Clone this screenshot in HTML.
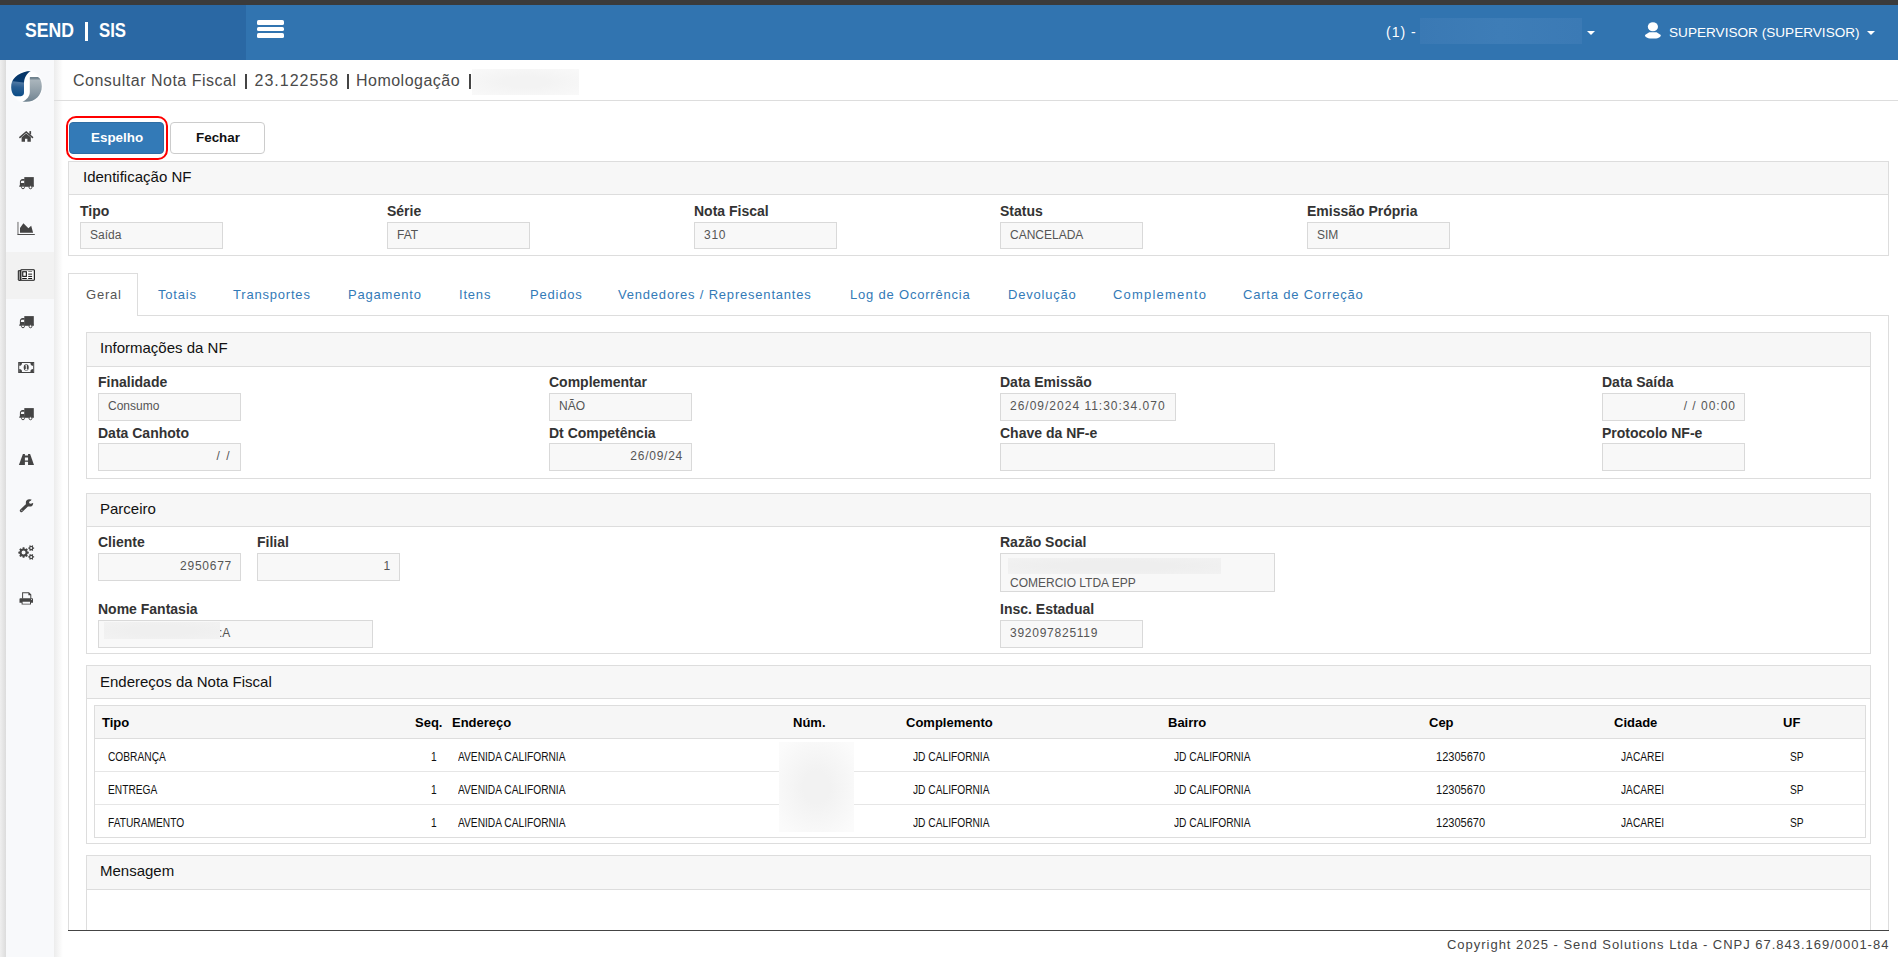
<!DOCTYPE html>
<html><head><meta charset="utf-8">
<style>
*{box-sizing:border-box;margin:0;padding:0}
html,body{width:1898px;height:957px;overflow:hidden;background:#fff;font-family:"Liberation Sans",sans-serif;color:#333}
.abs{position:absolute}
#topstrip{left:0;top:0;width:1898px;height:5px;background:#3b3b3b}
#hdr{left:0;top:5px;width:1898px;height:55px;background:#3174b0}
#brand{left:0;top:5px;width:246px;height:55px;background:#2a68a4}
#side{left:0;top:60px;width:54px;height:897px;background:#f8f9fb}
#sidestrip{left:0;top:60px;width:6px;height:897px;background:linear-gradient(to right,#efefef,#dcdcdc)}
#sideshadow{left:54px;top:60px;width:9px;height:897px;background:linear-gradient(to right,#ececec,rgba(255,255,255,0))}
#titlebar{left:54px;top:60px;width:1844px;height:41px;border-bottom:1px solid #ddd}
.t{position:absolute;white-space:nowrap;line-height:1}
.panel{position:absolute;border:1px solid #ddd;background:#fff}
.ph{position:absolute;left:0;top:0;right:0;background:#f7f7f7;border-bottom:1px solid #ddd}
.ph span{position:absolute;left:13px;font-size:15px;color:#111;white-space:nowrap;line-height:1}
.lbl{position:absolute;white-space:nowrap;font-weight:bold;font-size:14px;color:#333;line-height:1}
.inp{position:absolute;background:#f8f8f8;border:1px solid #d9d9d9;height:28px}
.inp span{position:absolute;top:6px;left:9px;font-size:12px;color:#555;white-space:nowrap;line-height:1}
.inp span.r{left:auto;right:8px}
.num{letter-spacing:.75px}
.tab{position:absolute;top:288px;font-size:13px;color:#337ab7;white-space:nowrap;line-height:1;letter-spacing:.8px}
.th{position:absolute;top:716px;font-weight:bold;font-size:13px;color:#000;white-space:nowrap;line-height:1}
.td{position:absolute;font-size:12px;color:#111;white-space:nowrap;line-height:1;transform-origin:0 0;transform:scaleX(.85)}
.tdn{transform:scaleX(.92)}
.ic{position:absolute;fill:#444}
</style></head><body>
<div id="topstrip" class="abs"></div>
<div id="hdr" class="abs"></div>
<div id="brand" class="abs"></div>
<div class="t" style="left:25px;top:19px;font-size:21px;font-weight:bold;color:#fff;transform-origin:0 0;transform:scaleX(.84)">SEND</div>
<div class="abs" style="left:85px;top:22px;width:3.4px;height:19px;background:#fff"></div>
<div class="t" style="left:98.5px;top:19px;font-size:21px;font-weight:bold;color:#fff;transform-origin:0 0;transform:scaleX(.8)">SIS</div>
<!-- hamburger -->
<div class="abs" style="left:257px;top:20.4px;width:27px;height:4.4px;background:#fff;border-radius:1.6px"></div>
<div class="abs" style="left:257px;top:26.8px;width:27px;height:4.2px;background:#fff;border-radius:1.6px"></div>
<div class="abs" style="left:257px;top:33.2px;width:27px;height:4.4px;background:#fff;border-radius:1.6px"></div>
<!-- right header -->
<div class="t" style="left:1386px;top:25px;font-size:14px;color:#fff;letter-spacing:1px">(1) -</div>
<div class="abs" style="left:1420px;top:18px;width:162px;height:26px;background:linear-gradient(to right,#3a79b4,#3e7db7 50%,#3b7ab5)"></div>
<div class="abs" style="left:1587px;top:31px;width:0;height:0;border-left:4.5px solid transparent;border-right:4.5px solid transparent;border-top:4px solid #fff"></div>
<svg class="abs" style="left:1640px;top:18px" width="26" height="24" viewBox="1640 18 26 24"><ellipse cx="1652.9" cy="26.8" rx="5.1" ry="4.5" fill="#fff"/><path d="M1649.2 32.2 L1656.6 32.2 L1660.8 35 C1660.8 37.6 1657.5 38.6 1652.9 38.6 C1648.3 38.6 1645 37.6 1645 35 Z" fill="#fff"/></svg>
<div class="t" style="left:1669px;top:26px;font-size:13.6px;color:#fff">SUPERVISOR (SUPERVISOR)</div>
<div class="abs" style="left:1867px;top:31px;width:0;height:0;border-left:4.5px solid transparent;border-right:4.5px solid transparent;border-top:4px solid #fff"></div>

<div id="side" class="abs"></div>
<div class="abs" style="left:6px;top:252px;width:48px;height:47px;background:#f2f2f2"></div>
<div id="sidestrip" class="abs"></div>
<div id="sideshadow" class="abs"></div>
<div id="titlebar" class="abs"></div>
<div class="t" style="left:73px;top:73px;font-size:16px;color:#4a4a4a;letter-spacing:.5px">Consultar Nota Fiscal</div>
<div class="abs" style="left:244.8px;top:74px;width:2px;height:15px;background:#444"></div>
<div class="t" style="left:254.5px;top:73px;font-size:16px;color:#4a4a4a;letter-spacing:1px">23.122558</div>
<div class="abs" style="left:346.6px;top:74px;width:2px;height:15px;background:#444"></div>
<div class="t" style="left:356px;top:73px;font-size:16px;color:#4a4a4a;letter-spacing:.48px">Homologação</div>
<div class="abs" style="left:469px;top:74px;width:2px;height:15px;background:#444"></div>
<div class="abs" style="left:472px;top:69px;width:107px;height:26px;background:radial-gradient(ellipse at center,#f3f3f3 30%,#f9f9f9 100%)"></div>

<!-- logo -->
<svg class="abs" style="left:6px;top:66px" width="42" height="42" viewBox="6 66 42 42">
<defs>
<linearGradient id="lb" gradientUnits="userSpaceOnUse" x1="20" y1="71" x2="17" y2="97"><stop offset="0" stop-color="#063466"/><stop offset=".4" stop-color="#073a6f"/><stop offset=".44" stop-color="#4f78a3"/><stop offset=".62" stop-color="#2b5f93"/><stop offset="1" stop-color="#074a85"/></linearGradient>
<linearGradient id="lg" gradientUnits="userSpaceOnUse" x1="0" y1="77" x2="0" y2="102"><stop offset="0" stop-color="#6b7e8a"/><stop offset=".08" stop-color="#7b8c97"/><stop offset=".12" stop-color="#aab5bc"/><stop offset=".6" stop-color="#8d9ca6"/><stop offset="1" stop-color="#6f8390"/></linearGradient>
<radialGradient id="halo" gradientUnits="userSpaceOnUse" cx="26.4" cy="86.4" r="17.5"><stop offset=".85" stop-color="#fff"/><stop offset="1" stop-color="#fff" stop-opacity="0"/></radialGradient>
</defs>
<circle cx="26.4" cy="86.4" r="17.5" fill="url(#halo)"/>
<path d="M30.8 71 C21 71.3 12.5 77 11.3 84.5 C10.9 88.5 11.5 92 13 94.2 C14 95.6 15.2 96.2 17 96.2 L20.8 96.2 C23 96 24 94.5 24 92.5 L24 82.5 C24.2 77.5 27 73 30.8 71 Z" fill="url(#lb)"/>
<path d="M30.2 77.1 L37.8 77.1 C40.5 78 41.8 82.5 41.8 86.4 C41.8 95 35 101.8 26.4 101.8 L22.4 101.8 C27 99.8 29.8 96 29.8 92 L29.8 77.6 Z" fill="url(#lg)"/>
</svg>

<!-- sidebar icons -->
<svg class="ic" style="left:18px;top:129px" width="16" height="15" viewBox="18 129 16 15"><rect x="29.4" y="131.1" width="1.7" height="3.4"/><polyline points="19.9,137.4 26.2,131.9 32.5,137.4" fill="none" stroke="#444" stroke-width="1.5" stroke-linecap="round"/><path d="M21.6 137.3 L26.2 133.6 L30.8 137.3 L30.8 141.8 L27.4 141.8 L27.4 138.8 L25 138.8 L25 141.8 L21.6 141.8 Z"/></svg>
<svg class="ic" style="left:18px;top:175px" width="18" height="15" viewBox="18 175 18 15"><rect x="24.3" y="177.1" width="9.5" height="9.4"/><path fill-rule="evenodd" d="M24.6 178.9 L22.5 178.9 C21 178.9 19.9 180.3 19.9 181.8 L19.9 186.5 L24.6 186.5 Z M20.9 183.1 L20.9 182 C20.9 181.3 21.5 180.8 22.3 180.8 L24.3 180.8 L24.3 183.1 Z"/><rect x="19.1" y="185.6" width="14.7" height="1"/><circle cx="23" cy="187.3" r="1.45" fill="#fff" stroke="#444" stroke-width="1"/><circle cx="30.5" cy="187.3" r="1.45" fill="#fff" stroke="#444" stroke-width="1"/></svg>
<svg class="ic" style="left:16px;top:221px" width="20" height="15" viewBox="16 221 20 15"><rect x="17.2" y="221.9" width="1.5" height="13" fill="#999"/><rect x="17.6" y="234" width="17.2" height="0.95"/><path d="M20 232.7 L20 228.1 L23.4 223.2 L28.4 228.3 L31.2 225.8 L33.1 232.7 Z"/></svg>
<svg style="position:absolute;left:16px;top:268px" width="20" height="14" viewBox="16 268 20 14"><rect x="20.75" y="269.75" width="13.6" height="10.5" rx="0.8" fill="#fff" stroke="#111" stroke-width="1.1"/><path d="M20.7 270.7 L18.3 270.7 L18.3 279.8 C18.3 280.2 18.6 280.4 19 280.4 L20.7 280.4 Z" fill="#999" stroke="#111" stroke-width="0.9"/><rect x="22.75" y="271.75" width="3.6" height="4.6" fill="#fff" stroke="#111" stroke-width="1.1"/><rect x="28.2" y="271.2" width="3.9" height="0.8" fill="#666"/><rect x="28.2" y="273.5" width="3.9" height="1.3" fill="#555"/><rect x="28.2" y="275.9" width="3.9" height="1" fill="#111"/><rect x="22.2" y="278" width="4.6" height="1" fill="#111"/><rect x="28.2" y="278" width="3.9" height="1" fill="#111"/></svg>
<svg class="ic" style="left:18px;top:314px" width="18" height="15" viewBox="18 175 18 15"><rect x="24.3" y="177.1" width="9.5" height="9.4"/><path fill-rule="evenodd" d="M24.6 178.9 L22.5 178.9 C21 178.9 19.9 180.3 19.9 181.8 L19.9 186.5 L24.6 186.5 Z M20.9 183.1 L20.9 182 C20.9 181.3 21.5 180.8 22.3 180.8 L24.3 180.8 L24.3 183.1 Z"/><rect x="19.1" y="185.6" width="14.7" height="1"/><circle cx="23" cy="187.3" r="1.45" fill="#fff" stroke="#444" stroke-width="1"/><circle cx="30.5" cy="187.3" r="1.45" fill="#fff" stroke="#444" stroke-width="1"/></svg>
<svg class="ic" style="left:18px;top:361px" width="17" height="13" viewBox="18 361 17 13"><path fill-rule="evenodd" d="M18.2 361.9 H34.2 V372.9 H18.2 Z M19.2 362.9 V371.9 H33.2 V362.9 Z"/><path d="M19.2 362.9 H22 A2.8 2.8 0 0 1 19.2 365.7 Z M33.2 362.9 H30.4 A2.8 2.8 0 0 0 33.2 365.7 Z M19.2 371.9 H22 A2.8 2.8 0 0 0 19.2 369.1 Z M33.2 371.9 H30.4 A2.8 2.8 0 0 1 33.2 369.1 Z"/><ellipse cx="26.2" cy="367.4" rx="2.5" ry="3.2"/><path d="M25.5 365.3 L26.8 364.8 L26.8 369.2 L27.6 369.2 L27.6 369.9 L25 369.9 L25 369.2 L25.8 369.2 L25.8 366.1 L25.3 366.3 Z" fill="#fff"/></svg>
<svg class="ic" style="left:18px;top:406px" width="18" height="15" viewBox="18 175 18 15"><rect x="24.3" y="177.1" width="9.5" height="9.4"/><path fill-rule="evenodd" d="M24.6 178.9 L22.5 178.9 C21 178.9 19.9 180.3 19.9 181.8 L19.9 186.5 L24.6 186.5 Z M20.9 183.1 L20.9 182 C20.9 181.3 21.5 180.8 22.3 180.8 L24.3 180.8 L24.3 183.1 Z"/><rect x="19.1" y="185.6" width="14.7" height="1"/><circle cx="23" cy="187.3" r="1.45" fill="#fff" stroke="#444" stroke-width="1"/><circle cx="30.5" cy="187.3" r="1.45" fill="#fff" stroke="#444" stroke-width="1"/></svg>
<svg class="ic" style="left:18px;top:453px" width="17" height="13" viewBox="18 453 17 13"><path d="M22.9 454 L30.1 454 L34 465 L18.9 465 Z"/><rect x="24.9" y="453.5" width="3.15" height="2" fill="#f8f9fb"/><rect x="24.9" y="457.5" width="3.15" height="3" fill="#f8f9fb"/><rect x="24.9" y="461.8" width="3.15" height="3.5" fill="#f8f9fb"/></svg>
<svg class="ic" style="left:16px;top:496px" width="20" height="18" viewBox="16 496 20 18"><line x1="21.4" y1="510.7" x2="26.6" y2="505.6" stroke="#444" stroke-width="3.1" stroke-linecap="round"/><circle cx="29.5" cy="502.9" r="3.7"/><circle cx="30.7" cy="502.2" r="1.5" fill="#f8f9fb"/><circle cx="32.7" cy="501.3" r="1.9" fill="#f8f9fb"/><circle cx="21.9" cy="510.2" r="0.5" fill="#f8f9fb"/></svg>
<svg class="ic" style="left:16px;top:543px" width="20" height="18" viewBox="16 543 20 18"><path fill-rule="evenodd" d="M27.52 551.55 L28.79 551.73 L28.79 553.47 L27.52 553.65 L27.11 554.66 L27.87 555.68 L26.64 556.91 L25.62 556.15 L24.61 556.56 L24.43 557.83 L22.69 557.83 L22.51 556.56 L21.50 556.15 L20.48 556.91 L19.25 555.68 L20.01 554.66 L19.60 553.65 L18.33 553.47 L18.33 551.73 L19.60 551.55 L20.01 550.54 L19.25 549.52 L20.48 548.29 L21.50 549.05 L22.51 548.64 L22.69 547.37 L24.43 547.37 L24.61 548.64 L25.62 549.05 L26.64 548.29 L27.87 549.52 L27.11 550.54 Z M25.56 552.60 A2.0 2.0 0 1 0 21.56 552.60 A2.0 2.0 0 1 0 25.56 552.60 Z"/><path fill-rule="evenodd" d="M33.28 547.38 L34.13 547.48 L34.13 548.72 L33.28 548.82 L32.87 549.54 L33.21 550.33 L32.13 550.95 L31.61 550.26 L30.79 550.26 L30.27 550.95 L29.19 550.33 L29.53 549.54 L29.12 548.82 L28.27 548.72 L28.27 547.48 L29.12 547.38 L29.53 546.66 L29.19 545.87 L30.27 545.25 L30.79 545.94 L31.61 545.94 L32.13 545.25 L33.21 545.87 L32.87 546.66 Z M32.20 548.10 A1.0 1.0 0 1 0 30.20 548.10 A1.0 1.0 0 1 0 32.20 548.10 Z"/><path fill-rule="evenodd" d="M33.28 556.18 L34.13 556.28 L34.13 557.52 L33.28 557.62 L32.87 558.34 L33.21 559.13 L32.13 559.75 L31.61 559.06 L30.79 559.06 L30.27 559.75 L29.19 559.13 L29.53 558.34 L29.12 557.62 L28.27 557.52 L28.27 556.28 L29.12 556.18 L29.53 555.46 L29.19 554.67 L30.27 554.05 L30.79 554.74 L31.61 554.74 L32.13 554.05 L33.21 554.67 L32.87 555.46 Z M32.20 556.90 A1.0 1.0 0 1 0 30.20 556.90 A1.0 1.0 0 1 0 32.20 556.90 Z"/></svg>
<svg class="ic" style="left:18px;top:591px" width="16" height="15" viewBox="18 591 16 15"><path fill-rule="evenodd" d="M22.1 592.2 L29 592.2 L31.3 594.5 L31.3 598.5 L30.3 598.5 L30.3 595.3 L28.4 595.3 L28.4 593.2 L23.1 593.2 L23.1 598.5 L22.1 598.5 Z"/><path fill-rule="evenodd" d="M20.3 598.3 L32.2 598.3 C32.7 598.3 33 598.6 33 599.1 L33 602.7 L31 602.7 L31 604.6 L21.6 604.6 L21.6 602.7 L19.5 602.7 L19.5 599.1 C19.5 598.6 19.8 598.3 20.3 598.3 Z M22.6 601.8 L22.6 603.7 L30 603.7 L30 601.8 Z"/><circle cx="31.5" cy="599.5" r="0.5" fill="#f8f9fb"/></svg>

<!-- buttons -->
<div class="abs" style="left:66px;top:116px;width:102px;height:44px;border:2.5px solid #f00;border-radius:10px"></div>
<div class="abs" style="left:69px;top:122px;width:95px;height:32px;background:#337ab7;border:1px solid #2e6da4;border-radius:4px"></div>
<div class="t" style="left:91px;top:131px;font-size:13.4px;font-weight:bold;color:#fff">Espelho</div>
<div class="abs" style="left:170px;top:122px;width:95px;height:32px;background:#fff;border:1px solid #ccc;border-radius:4px"></div>
<div class="t" style="left:196px;top:131px;font-size:13.4px;font-weight:bold;color:#111">Fechar</div>

<!-- Identificacao NF -->
<div class="panel" style="left:68px;top:161px;width:1821px;height:95px"><div class="ph" style="height:33px"><span style="left:14px;top:7px">Identificação NF</span></div></div>
<div class="lbl" style="left:80px;top:204px">Tipo</div>
<div class="inp" style="left:80px;top:222px;width:143px;height:27px"><span>Saída</span></div>
<div class="lbl" style="left:387px;top:204px">Série</div>
<div class="inp" style="left:387px;top:222px;width:143px;height:27px"><span>FAT</span></div>
<div class="lbl" style="left:694px;top:204px">Nota Fiscal</div>
<div class="inp" style="left:694px;top:222px;width:143px;height:27px"><span class="num">310</span></div>
<div class="lbl" style="left:1000px;top:204px">Status</div>
<div class="inp" style="left:1000px;top:222px;width:143px;height:27px"><span>CANCELADA</span></div>
<div class="lbl" style="left:1307px;top:204px">Emissão Própria</div>
<div class="inp" style="left:1307px;top:222px;width:143px;height:27px"><span>SIM</span></div>

<!-- tabs -->
<div class="abs" style="left:68px;top:315px;width:1821px;height:616px;border:1px solid #ddd;border-bottom:none"></div>
<div class="abs" style="left:68px;top:273px;width:70px;height:43px;background:#fff;border:1px solid #ddd;border-bottom:none"></div>
<div class="tab" style="left:86px;color:#555">Geral</div>
<div class="tab" style="left:158px">Totais</div>
<div class="tab" style="left:233px">Transportes</div>
<div class="tab" style="left:348px">Pagamento</div>
<div class="tab" style="left:459px">Itens</div>
<div class="tab" style="left:530px">Pedidos</div>
<div class="tab" style="left:618px">Vendedores / Representantes</div>
<div class="tab" style="left:850px">Log de Ocorrência</div>
<div class="tab" style="left:1008px">Devolução</div>
<div class="tab" style="left:1113px;letter-spacing:1.2px">Complemento</div>
<div class="tab" style="left:1243px">Carta de Correção</div>

<!-- Informacoes da NF -->
<div class="panel" style="left:86px;top:332px;width:1785px;height:147px"><div class="ph" style="height:34px"><span style="left:13px;top:7px">Informações da NF</span></div></div>
<div class="lbl" style="left:98px;top:375px">Finalidade</div>
<div class="inp" style="left:98px;top:393px;width:143px"><span>Consumo</span></div>
<div class="lbl" style="left:98px;top:426px">Data Canhoto</div>
<div class="inp" style="left:98px;top:443px;width:143px"><span class="r" style="letter-spacing:1.5px;right:9px">/ /</span></div>
<div class="lbl" style="left:549px;top:375px">Complementar</div>
<div class="inp" style="left:549px;top:393px;width:143px"><span>NÃO</span></div>
<div class="lbl" style="left:549px;top:426px">Dt Competência</div>
<div class="inp" style="left:549px;top:443px;width:143px"><span class="r num">26/09/24</span></div>
<div class="lbl" style="left:1000px;top:375px">Data Emissão</div>
<div class="inp" style="left:1000px;top:393px;width:176px"><span class="num" style="letter-spacing:1px">26/09/2024 11:30:34.070</span></div>
<div class="lbl" style="left:1000px;top:426px">Chave da NF-e</div>
<div class="inp" style="left:1000px;top:443px;width:275px"></div>
<div class="lbl" style="left:1602px;top:375px">Data Saída</div>
<div class="inp" style="left:1602px;top:393px;width:143px"><span class="r num" style="letter-spacing:1px">/ / 00:00</span></div>
<div class="lbl" style="left:1602px;top:426px">Protocolo NF-e</div>
<div class="inp" style="left:1602px;top:443px;width:143px"></div>

<!-- Parceiro -->
<div class="panel" style="left:86px;top:493px;width:1785px;height:161px"><div class="ph" style="height:33px"><span style="left:13px;top:7px">Parceiro</span></div></div>
<div class="lbl" style="left:98px;top:535px">Cliente</div>
<div class="inp" style="left:98px;top:553px;width:143px"><span class="r num">2950677</span></div>
<div class="lbl" style="left:257px;top:535px">Filial</div>
<div class="inp" style="left:257px;top:553px;width:143px"><span class="r num">1</span></div>
<div class="lbl" style="left:98px;top:602px">Nome Fantasia</div>
<div class="inp" style="left:98px;top:620px;width:275px"><span style="left:120px">:A</span></div>
<div class="abs" style="left:104px;top:622px;width:116px;height:17px;background:radial-gradient(ellipse at center,#efefef 40%,#f2f2f2 100%)"></div>
<div class="lbl" style="left:1000px;top:535px">Razão Social</div>
<div class="inp" style="left:1000px;top:553px;width:275px;height:39px"><span style="top:23px">COMERCIO LTDA EPP</span></div>
<div class="abs" style="left:1008px;top:558px;width:213px;height:16px;background:radial-gradient(ellipse at center,#eeeeee 40%,#f2f2f2 100%)"></div>
<div class="lbl" style="left:1000px;top:602px">Insc. Estadual</div>
<div class="inp" style="left:1000px;top:620px;width:143px"><span class="num">392097825119</span></div>

<!-- Enderecos -->
<div class="panel" style="left:86px;top:665px;width:1785px;height:179px"><div class="ph" style="height:33px"><span style="left:13px;top:8px">Endereços da Nota Fiscal</span></div></div>
<div class="abs" style="left:94px;top:705px;width:1772px;height:133px;border:1px solid #ddd"></div>
<div class="abs" style="left:95px;top:706px;width:1770px;height:33px;background:#f6f6f6;border-bottom:1px solid #ddd"></div>
<div class="abs" style="left:95px;top:771px;width:1770px;height:1px;background:#e6e6e6"></div>
<div class="abs" style="left:95px;top:804px;width:1770px;height:1px;background:#e6e6e6"></div>
<div class="th" style="left:102px">Tipo</div>
<div class="th" style="left:415px">Seq.</div>
<div class="th" style="left:452px">Endereço</div>
<div class="th" style="left:793px">Núm.</div>
<div class="th" style="left:906px">Complemento</div>
<div class="th" style="left:1168px">Bairro</div>
<div class="th" style="left:1429px">Cep</div>
<div class="th" style="left:1614px">Cidade</div>
<div class="th" style="left:1783px">UF</div>

<div class="td" style="left:108px;top:751px">COBRANÇA</div>
<div class="td" style="left:431px;top:751px">1</div>
<div class="td" style="left:458px;top:751px">AVENIDA CALIFORNIA</div>
<div class="td" style="left:913px;top:751px">JD CALIFORNIA</div>
<div class="td" style="left:1174px;top:751px">JD CALIFORNIA</div>
<div class="td tdn" style="left:1436px;top:751px">12305670</div>
<div class="td" style="left:1621px;top:751px">JACAREI</div>
<div class="td" style="left:1790px;top:751px">SP</div>

<div class="td" style="left:108px;top:784px">ENTREGA</div>
<div class="td" style="left:431px;top:784px">1</div>
<div class="td" style="left:458px;top:784px">AVENIDA CALIFORNIA</div>
<div class="td" style="left:913px;top:784px">JD CALIFORNIA</div>
<div class="td" style="left:1174px;top:784px">JD CALIFORNIA</div>
<div class="td tdn" style="left:1436px;top:784px">12305670</div>
<div class="td" style="left:1621px;top:784px">JACAREI</div>
<div class="td" style="left:1790px;top:784px">SP</div>

<div class="td" style="left:108px;top:817px">FATURAMENTO</div>
<div class="td" style="left:431px;top:817px">1</div>
<div class="td" style="left:458px;top:817px">AVENIDA CALIFORNIA</div>
<div class="td" style="left:913px;top:817px">JD CALIFORNIA</div>
<div class="td" style="left:1174px;top:817px">JD CALIFORNIA</div>
<div class="td tdn" style="left:1436px;top:817px">12305670</div>
<div class="td" style="left:1621px;top:817px">JACAREI</div>
<div class="td" style="left:1790px;top:817px">SP</div>
<div class="abs" style="left:779px;top:742px;width:75px;height:90px;background:radial-gradient(ellipse at center,#f2f2f2 25%,#fbfbfb 90%)"></div>

<!-- Mensagem -->
<div class="panel" style="left:86px;top:855px;width:1785px;height:120px"><div class="ph" style="height:34px"><span style="left:13px;top:7px">Mensagem</span></div></div>

<!-- footer -->
<div class="abs" style="left:68px;top:930px;width:1821px;height:27px;background:#fff;border-top:1px solid #444"></div>
<div class="t" style="left:1447px;top:938px;font-size:13px;color:#444;letter-spacing:.98px">Copyright 2025 - Send Solutions Ltda - CNPJ 67.843.169/0001-84</div>
</body></html>
